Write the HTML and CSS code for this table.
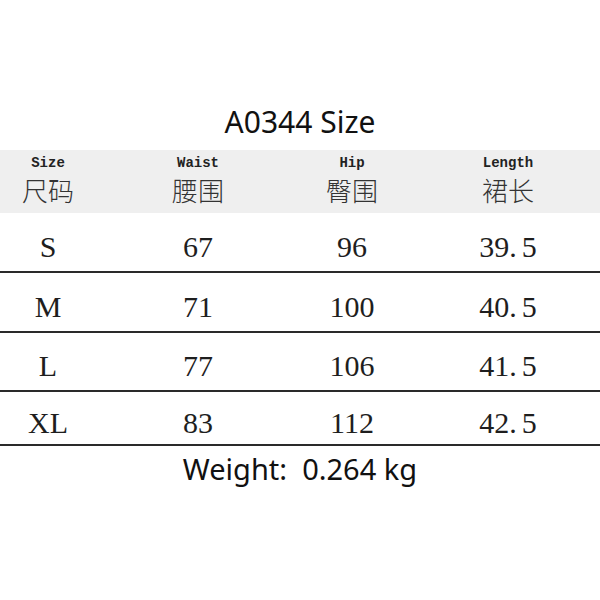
FILE: index.html
```html
<!DOCTYPE html>
<html lang="zh">
<head>
<meta charset="utf-8">
<title>A0344 Size</title>
<link rel="stylesheet" href="styles.css">
</head>
<body>
<h1 class="title">A0344 Size</h1>
<div class="table">
  <div class="row head">
    <div class="cell"><span class="en">Size</span><span class="zh">尺码</span></div>
    <div class="cell"><span class="en">Waist</span><span class="zh">腰围</span></div>
    <div class="cell"><span class="en">Hip</span><span class="zh">臀围</span></div>
    <div class="cell last"><span class="en">Length</span><span class="zh">裙长</span></div>
  </div>
  <div class="row body">
    <div class="cell">S</div>
    <div class="cell">67</div>
    <div class="cell">96</div>
    <div class="cell last">39<span class="dot">.</span>5</div>
  </div>
  <div class="row body">
    <div class="cell">M</div>
    <div class="cell">71</div>
    <div class="cell">100</div>
    <div class="cell last">40<span class="dot">.</span>5</div>
  </div>
  <div class="row body">
    <div class="cell">L</div>
    <div class="cell">77</div>
    <div class="cell">106</div>
    <div class="cell last">41<span class="dot">.</span>5</div>
  </div>
  <div class="row body">
    <div class="cell">XL</div>
    <div class="cell">83</div>
    <div class="cell">112</div>
    <div class="cell last">42<span class="dot">.</span>5</div>
  </div>
</div>
<p class="weight">Weight:&nbsp; 0.264 kg</p>
</body>
</html>
```

FILE: styles.css
```css
html, body {
  margin: 0;
  padding: 0;
  background: #ffffff;
}

body {
  width: 600px;
  overflow: hidden;
}

.title {
  margin: 0;
  padding-top: 102px;
  height: 40px;
  padding-bottom: 8px;
  line-height: 40px;
  font-family: "Noto Sans", "Open Sans", sans-serif;
  font-weight: 400;
  font-size: 30px;
  color: #111111;
  text-align: center;
}

.table {
  display: flex;
  flex-direction: column;
}

.row {
  display: grid;
  grid-template-columns: 96px 204px 104px 1fr;
}

.cell {
  display: flex;
  flex-direction: column;
  align-items: center;
}

.cell.last {
  padding-left: 12px;
}

.head {
  height: 63px;
  background: #efefef;
}

.head .cell {
  padding-top: 5px;
}

.en {
  font-family: "Liberation Mono", monospace;
  font-weight: 700;
  font-size: 14px;
  line-height: 16px;
  color: #222222;
}

.zh {
  margin-top: 6px;
  font-family: "Noto Sans CJK SC", sans-serif;
  font-weight: 300;
  font-size: 26px;
  line-height: 26px;
  color: #333333;
}

.body {
  border-bottom: 2px solid #2a2a2a;
  font-family: "Liberation Serif", serif;
  font-size: 30px;
  color: #1e1e1e;
}

.body .cell {
  flex-direction: row;
  justify-content: center;
  align-items: center;
  padding-top: 9px;
}

.body:nth-child(2) { height: 58px; }
.body:nth-child(3) { height: 58px; }
.body:nth-child(4) { height: 57px; }
.body:nth-child(5) { height: 52px; }

.dot {
  padding-right: 5px;
}

.weight {
  margin: 3px 0 0;
  line-height: 40px;
  font-family: "Noto Sans", "Open Sans", sans-serif;
  font-size: 29px;
  color: #111111;
  text-align: center;
  white-space: pre;
}
```
